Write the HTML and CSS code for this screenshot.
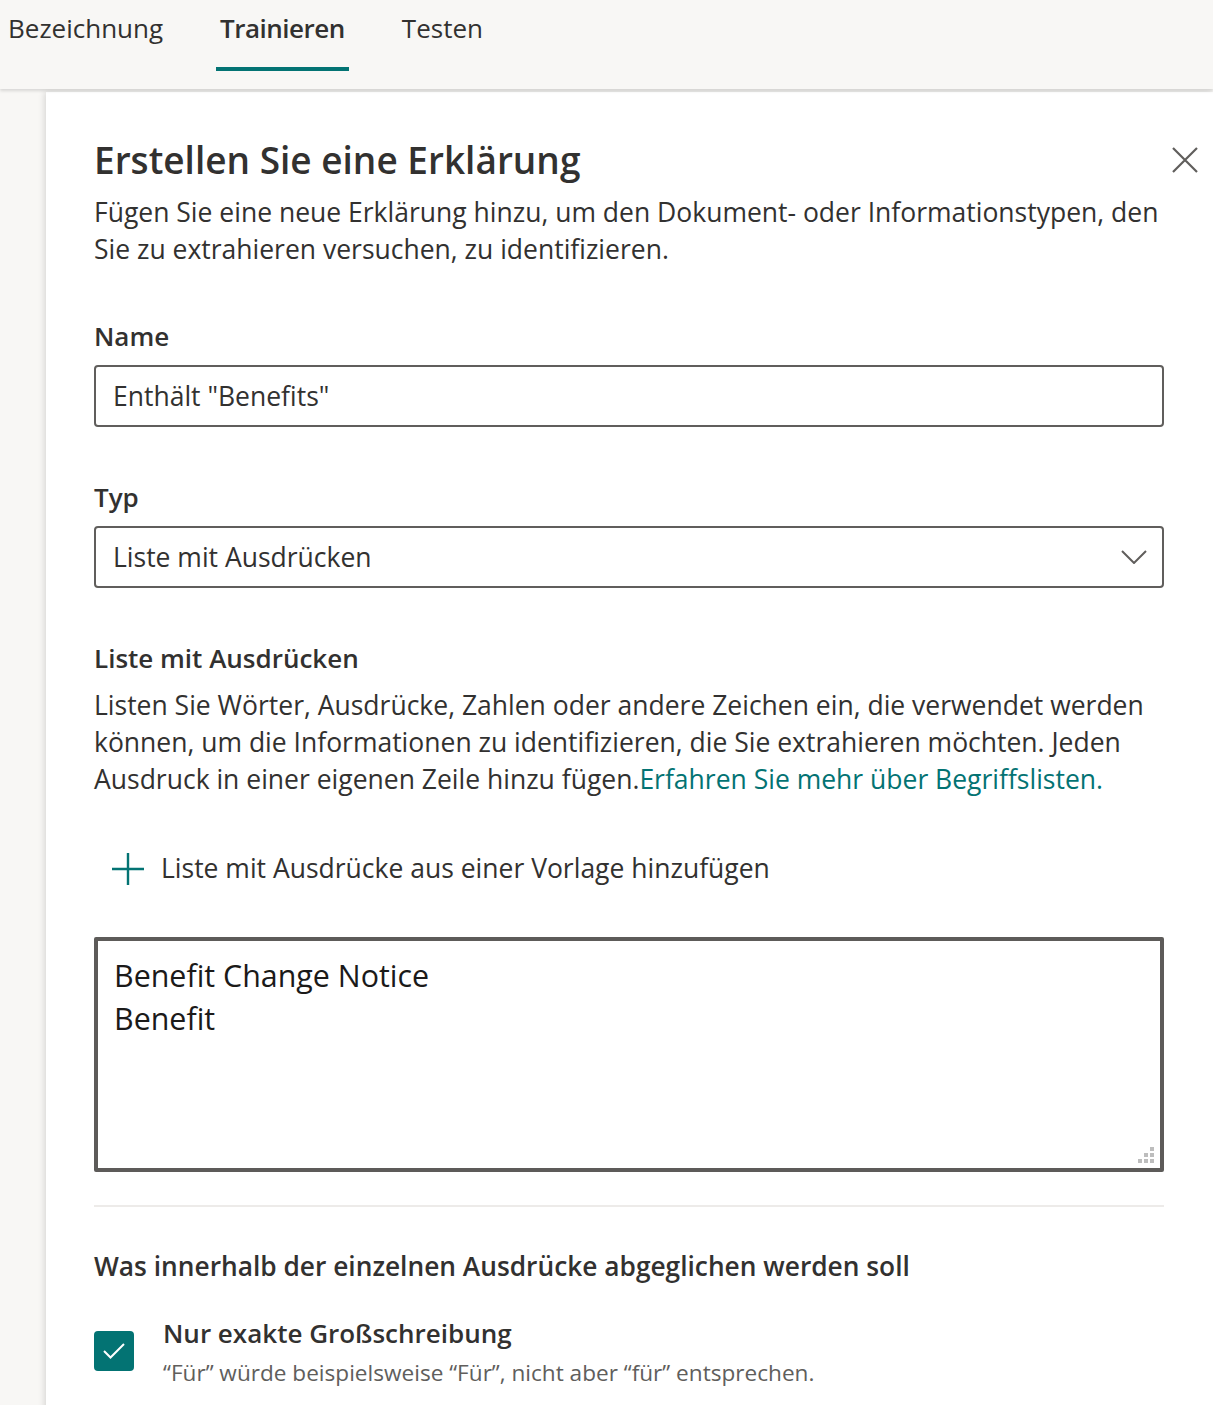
FILE: index.html
```html
<!DOCTYPE html>
<html lang="de">
<head>
    <meta charset="UTF-8">
    <title>Erklärung erstellen</title>
    <link rel="stylesheet" href="styles.css">
</head>
<body>
    <div class="tabs">
        <div class="tab">Bezeichnung</div>
        <div class="tab active">Trainieren</div>
        <div class="tab">Testen</div>
    </div>
    <div class="page">
        <div class="side"></div>
        <div class="panel">
            <div class="head">
                <h1>Erstellen Sie eine Erklärung</h1>
                <svg class="close" width="26" height="26" viewBox="0 0 26 26">
                    <path d="M1 1L25 25M25 1L1 25" stroke="#605e5c" stroke-width="2.2" fill="none"/>
                </svg>
            </div>
            <p class="desc">Fügen Sie eine neue Erklärung hinzu, um den Dokument- oder Informationstypen, den Sie zu extrahieren versuchen, zu identifizieren.</p>

            <div class="label first">Name</div>
            <div class="field">Enthält "Benefits"</div>

            <div class="label">Typ</div>
            <div class="field select">
                <span>Liste mit Ausdrücken</span>
                <svg width="26" height="14" viewBox="0 0 26 14">
                    <path d="M1 1L13 13L25 1" stroke="#605e5c" stroke-width="2" fill="none"/>
                </svg>
            </div>

            <div class="label">Liste mit Ausdrücken</div>
            <p class="text">Listen Sie Wörter, Ausdrücke, Zahlen oder andere Zeichen ein, die verwendet werden können, um die Informationen zu identifizieren, die Sie extrahieren möchten. Jeden Ausdruck in einer eigenen Zeile hinzu fügen.<a href="#">Erfahren Sie mehr über Begriffslisten.</a></p>

            <div class="add">
                <svg width="32" height="32" viewBox="0 0 32 32">
                    <path d="M16 0V32M0 16H32" stroke="#037373" stroke-width="2.4" fill="none"/>
                </svg>
                <span>Liste mit Ausdrücke aus einer Vorlage hinzufügen</span>
            </div>

            <div class="area">
                <div>Benefit Change Notice</div>
                <div>Benefit</div>
                <svg class="grip" width="16" height="16" viewBox="0 0 16 16" fill="#bdbdbd">
                    <rect x="12" y="0" width="4" height="4"/>
                    <rect x="6" y="6" width="4" height="4"/>
                    <rect x="12" y="6" width="4" height="4"/>
                    <rect x="0" y="12" width="4" height="4"/>
                    <rect x="6" y="12" width="4" height="4"/>
                    <rect x="12" y="12" width="4" height="4"/>
                </svg>
            </div>

            <div class="divider"></div>

            <div class="label match">Was innerhalb der einzelnen Ausdrücke abgeglichen werden soll</div>

            <div class="check-row">
                <div class="checkbox">
                    <svg width="24" height="18" viewBox="0 0 24 18">
                        <path d="M2 9L8.5 15.5L22 2" stroke="#fff" stroke-width="2" fill="none"/>
                    </svg>
                </div>
                <div>
                    <div class="check-title">Nur exakte Großschreibung</div>
                    <div class="check-sub">“Für” würde beispielsweise “Für”, nicht aber “für” entsprechen.</div>
                </div>
            </div>
        </div>
    </div>
</body>
</html>
```
FILE: styles.css
```css
*{
    margin: 0;
    padding: 0;
    box-sizing: border-box;
}
body{
    font-family: "Segoe UI", "Open Sans", sans-serif;
    color: #323130;
    background-color: #f8f7f5;
    overflow: hidden;
}
.tabs{
    display: flex;
    gap: 49px;
    height: 89px;
    padding-left: 4px;
    background-color: #f8f7f5;
    box-shadow: 0 2px 3px rgba(0,0,0,0.13);
    position: relative;
    z-index: 2;
}
.tab{
    height: 71px;
    padding: 0 4px;
    font-size: 26px;
    line-height: 56px;
    border-bottom: 4px solid transparent;
}
.tab.active{
    font-weight: 600;
    letter-spacing: -0.5px;
    border-bottom-color: #037373;
}
.page{
    display: flex;
    margin-top: 3px;
}
.side{
    width: 46px;
    flex-shrink: 0;
}
.panel{
    flex: 1;
    background: #ffffff;
    padding: 42px 49px 40px 48px;
    min-height: 1313px;
    box-shadow: -2px 0 6px rgba(0,0,0,0.12);
}
.head{
    display: flex;
    justify-content: space-between;
    align-items: center;
}
h1{
    font-size: 37px;
    font-weight: 600;
    line-height: 52px;
}
.close{
    margin-right: -34px;
}
.desc, .text{
    font-size: 26.5px;
    line-height: 37px;
}
.desc{
    margin-top: 8px;
}
.label{
    font-size: 26px;
    font-weight: 600;
    line-height: 37px;
    margin-top: 52px;
}
.label.first{
    margin-top: 50px;
}
.field{
    margin-top: 10px;
    height: 62px;
    border: 2px solid #605e5c;
    border-radius: 4px;
    padding: 0 17px;
    font-size: 26.5px;
    line-height: 58px;
}
.select{
    display: flex;
    justify-content: space-between;
    align-items: center;
    padding-right: 15px;
}
.text{
    margin-top: 10px;
}
.text a{
    color: #037373;
    text-decoration: none;
}
.add{
    display: flex;
    align-items: center;
    gap: 17px;
    padding-left: 18px;
    margin-top: 52px;
    font-size: 26.5px;
    line-height: 37px;
}
.area{
    position: relative;
    margin-top: 50px;
    height: 235px;
    border: 4px solid #5d5b59;
    border-radius: 2px;
    padding: 13px 16px;
    font-size: 30.4px;
    line-height: 43px;
    color: #1b1a19;
}
.grip{
    position: absolute;
    right: 6px;
    bottom: 5px;
}
.divider{
    margin-top: 33px;
    height: 2px;
    background-color: #edebe9;
}
.label.match{
    margin-top: 41px;
    font-size: 26.3px;
}
.check-row{
    display: flex;
    gap: 29px;
    margin-top: 30px;
}
.checkbox{
    width: 40px;
    height: 40px;
    margin-top: 16px;
    border-radius: 4px;
    background-color: #037373;
    display: flex;
    align-items: center;
    justify-content: center;
    flex-shrink: 0;
}
.check-title{
    font-size: 26px;
    font-weight: 600;
    line-height: 37px;
}
.check-sub{
    margin-top: 6px;
    font-size: 22.6px;
    line-height: 30px;
    color: #605e5c;
}
```
